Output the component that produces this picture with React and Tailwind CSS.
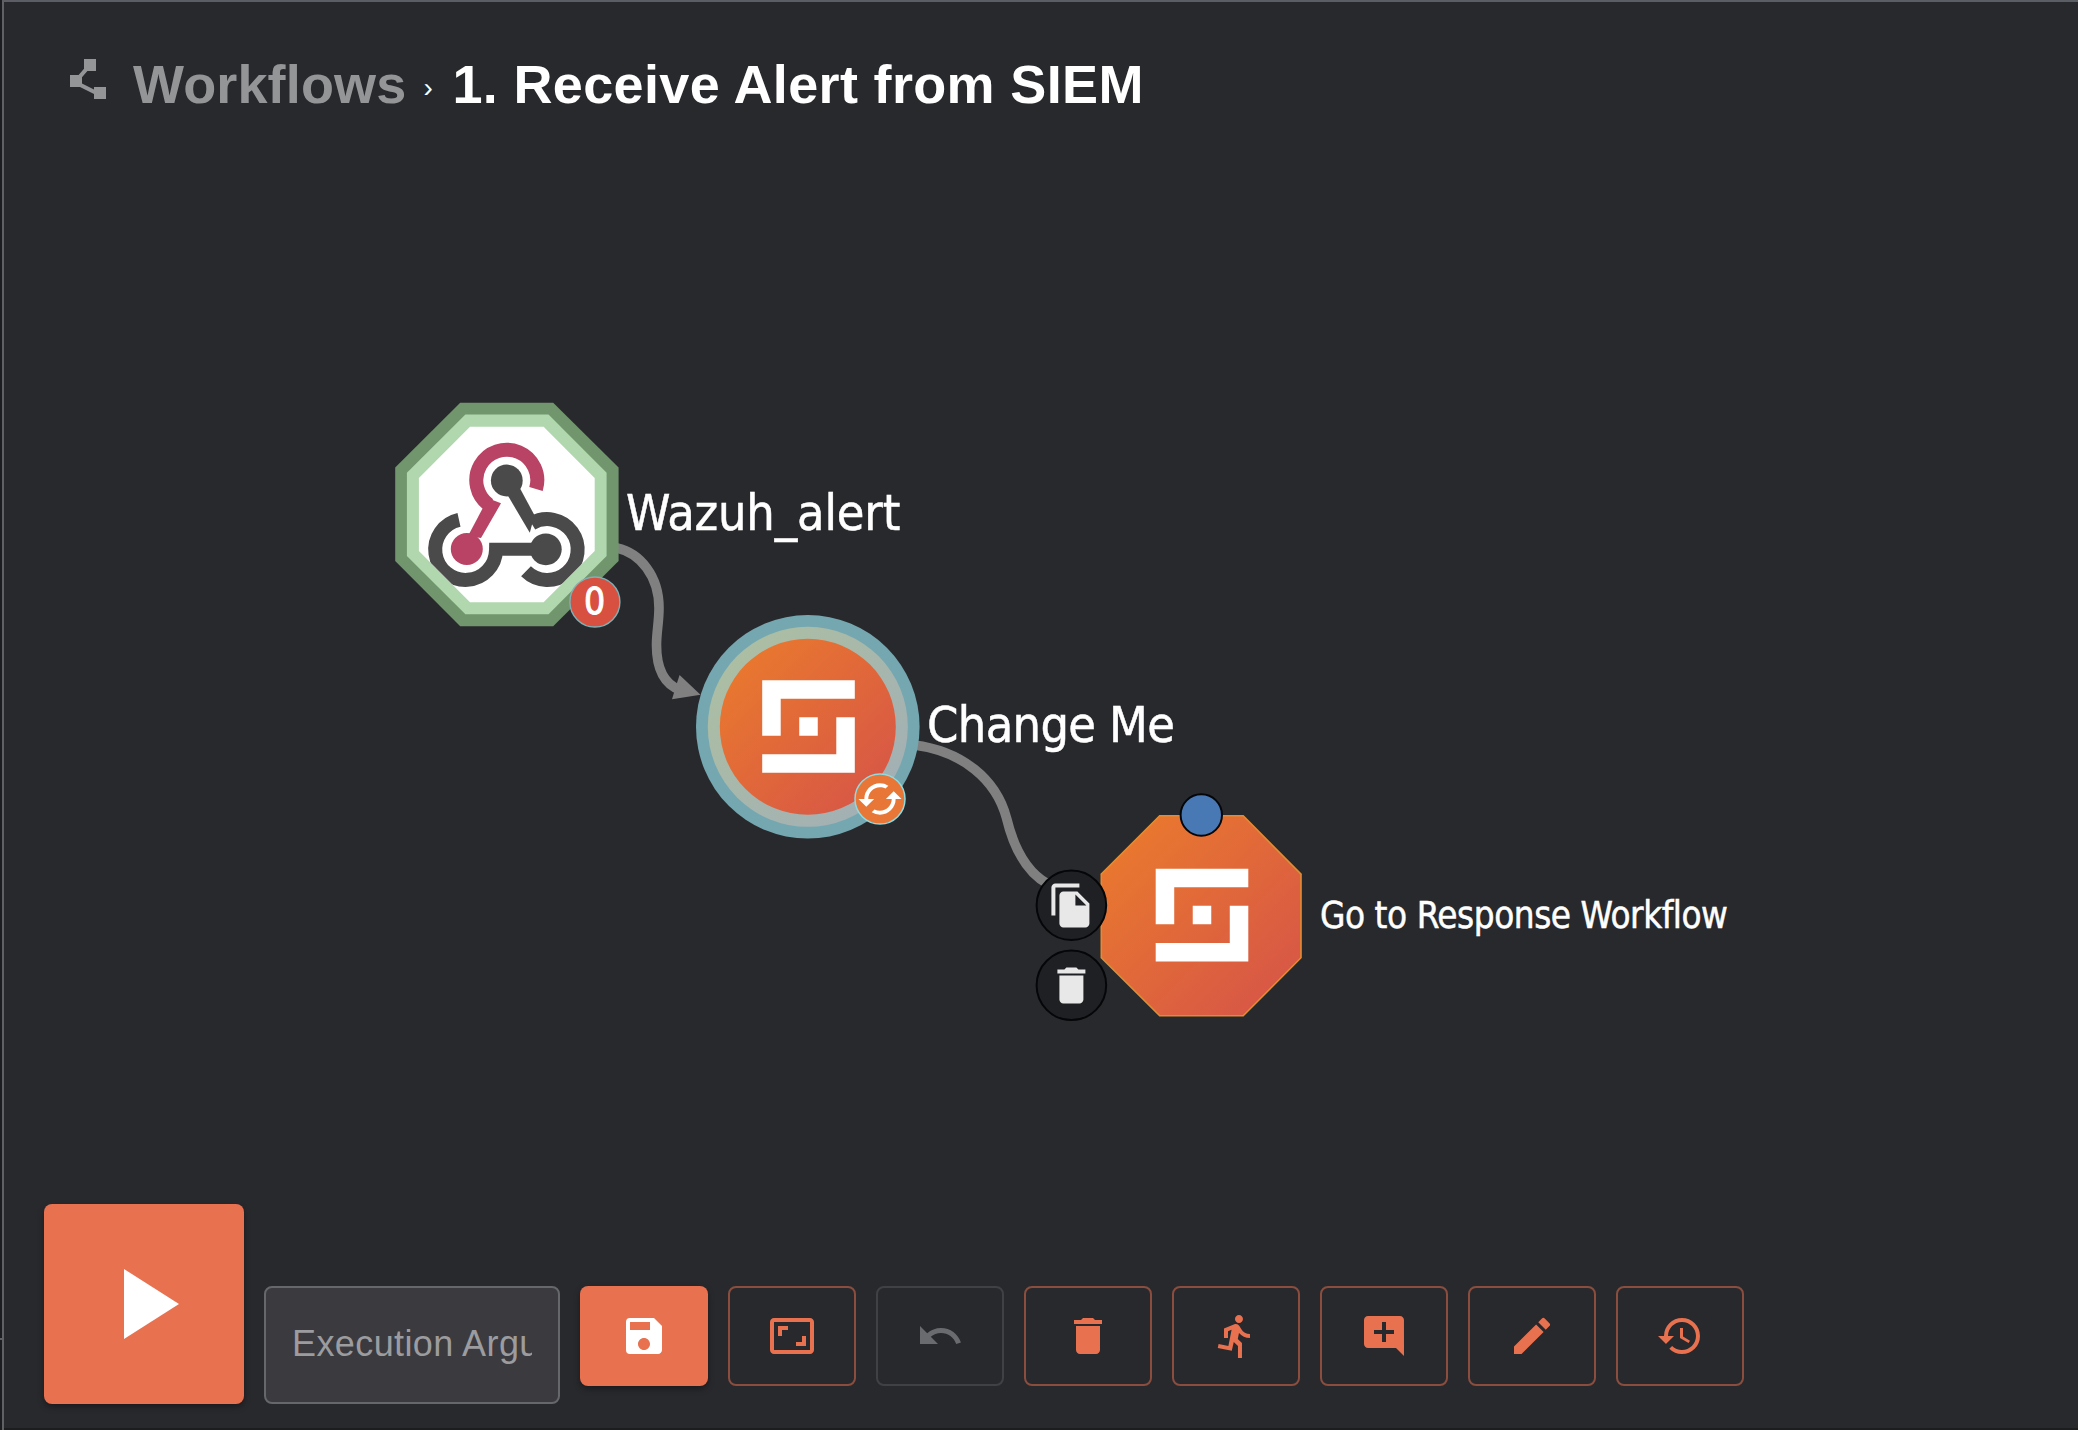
import React from "react";
import {
  MdPolyline, MdSave, MdAspectRatio, MdUndo, MdDelete, MdDirectionsRun,
  MdAddComment, MdEdit, MdHistory, MdCached, MdFileCopy, MdPlayArrow,
} from "react-icons/md";

const labelFont = "font-['DejaVu_Sans_Condensed','DejaVu_Sans',sans-serif] [font-stretch:condensed] whitespace-nowrap";

function WebhookLogo() {
  return (
    <g fill="none" strokeWidth="14">
      <path stroke="#b84364" d="M536 489 A30.5 30.5 0 1 0 489 505" />
      <path fill="#b84364" d="M482.3 509 L490 499 L501 503.3 L481 538 L468 536 Z" />
      <circle cx="466.8" cy="549" r="16" fill="#b84364" />
      <circle cx="506.8" cy="480.5" r="15.9" fill="#4a4a4a" />
      <path fill="#4a4a4a" d="M507.5 495 L519.8 488 L534.5 515.3 L529.8 532.7 Z" />
      <path stroke="#4a4a4a" d="M531.6 523.5 A30.4 30.4 0 1 1 526 571.3" />
      <circle cx="545.8" cy="549.3" r="15.9" fill="#4a4a4a" />
      <path fill="#4a4a4a" d="M489.2 542.7 H535 V555.8 H502.5 L489 552 Z" />
      <path stroke="#4a4a4a" d="M496 550 A30.4 30.4 0 1 1 459 519.8" />
    </g>
  );
}

function ShuffleLogo({ x, y }) {
  return (
    <path
      transform={`translate(${x} ${y}) scale(18.52)`}
      fill="#fff"
      d="M0 0H5V1H1V3H0ZM2 2H3V3H2ZM4 2H5V5H0V4H4Z"
    />
  );
}

function Graph() {
  return (
    <svg className="block h-full w-full" viewBox="4 128 2074 1076">
      <defs>
        <linearGradient id="orange" x1="0.06" y1="0.06" x2="0.96" y2="0.96">
          <stop offset="0" stopColor="#ea7a2d" />
          <stop offset="1" stopColor="#d65448" />
        </linearGradient>
        <linearGradient id="ring" x1="0.1" y1="0.1" x2="0.9" y2="0.9">
          <stop offset="0" stopColor="#acbfa2" />
          <stop offset="1" stopColor="#a2afb5" />
        </linearGradient>
      </defs>

      <g fill="none" stroke="#808080" strokeWidth="9.6">
        <path d="M617 548 C640 553 659 576 659 608 C659 622 656.5 632 656.5 645 C656.5 668 664 684 680 690" />
        <path d="M914 745 C962 751 996 779 1006.5 818 C1014 849 1028 873 1048 884" />
      </g>
      <path fill="#808080" d="M700.5 694.8 L679.6 675 L677 683 L672 699.3 Z" />

      <path fill="#71956d" d="M460.2 402.7H553.2L618.6 467.5V561L553.2 626.3H460.2L395.2 561V467.5Z" />
      <path fill="#b0d7ad" d="M465.4 414.5H548.5L606.6 472.7V556L548.5 614.2H465.4L406.9 556V472.7Z" />
      <path fill="#fff" d="M470 426.7H543.6L594.7 477.9V551L543.6 602.2H470L418.9 551V477.9Z" />
      <clipPath id="face">
        <path d="M470 426.7H543.6L594.7 477.9V551L543.6 602.2H470L418.9 551V477.9Z" />
      </clipPath>
      <g clipPath="url(#face)"><WebhookLogo /></g>
      <circle cx="594.9" cy="602" r="25" fill="#d8503f" stroke="#7fb0b6" strokeWidth="1.4" />

      <circle cx="807.8" cy="726.8" r="111.8" fill="#75a7b1" />
      <circle cx="807.8" cy="726.8" r="100" fill="url(#ring)" />
      <circle cx="807.8" cy="726.8" r="88" fill="url(#orange)" />
      <ShuffleLogo x={762.2} y={680.2} />
      <circle cx="880" cy="799" r="25" fill="#e87636" stroke="#8edbe2" strokeWidth="1.5" />
      <MdCached x="856.5" y="775.5" size={47} color="#fff" />

      <path
        fill="url(#orange)" stroke="#df8d34" strokeWidth="1.6"
        d="M1159.7 815.7H1243.2L1301 874.2V957.7L1243.2 1015.7H1159.7L1101.3 957.7V874.2Z"
      />
      <ShuffleLogo x={1155.7} y={868.8} />
      <circle cx="1201.3" cy="815" r="20.7" fill="#4879b4" stroke="#050608" strokeWidth="2" />
      {[905.3, 985.3].map((cy) => (
        <circle key={cy} cx="1071.4" cy={cy} r="34.8" fill="#1f2024" stroke="#050608" strokeWidth="2" />
      ))}
      <MdFileCopy x="1047.4" y="881.6" size={48} color="#e8e8e8" />
      <MdDelete x="1047.4" y="961.4" size={48} color="#e8e8e8" />
    </svg>
  );
}

const tools = [
  { name: "Save", Icon: MdSave, look: "bg-[#e8714f] text-white shadow-[0_3px_6px_rgba(0,0,0,0.35)]" },
  { name: "Fit to screen", Icon: MdAspectRatio, look: "border-2 border-[#8a4d3e] text-[#e8714f]" },
  { name: "Undo", Icon: MdUndo, look: "border-2 border-[#404145] text-[#6a6b6e]" },
  { name: "Delete", Icon: MdDelete, look: "border-2 border-[#8a4d3e] text-[#e8714f]" },
  { name: "Show executions", Icon: MdDirectionsRun, look: "border-2 border-[#8a4d3e] text-[#e8714f]" },
  { name: "Add comment", Icon: MdAddComment, look: "border-2 border-[#8a4d3e] text-[#e8714f]" },
  { name: "Edit", Icon: MdEdit, look: "border-2 border-[#8a4d3e] text-[#e8714f]" },
  { name: "History", Icon: MdHistory, look: "border-2 border-[#8a4d3e] text-[#e8714f]" },
];

export default function App() {
  return (
    <div className="flex h-[1430px] w-[2078px] overflow-hidden bg-[#28292d] font-['Liberation_Sans',Arial,sans-serif]">
      <div className="flex w-[2px] shrink-0 flex-col bg-[#1c1d20] pt-[1338px]">
        <div className="h-[2px] bg-[#5f6165]" />
      </div>
      <div className="flex min-w-0 flex-1 flex-col border-t-2 border-l-2 border-t-[#5c5e65] border-l-[#5f6165]">
        <header className="flex h-[126px] shrink-0 items-start pt-[54px] pl-[60px] text-[54px] leading-none font-bold tracking-[0.35px] whitespace-nowrap">
          <MdPolyline size={48} className="-mt-px shrink-0 text-[#949597]" />
          <span className="mt-px ml-[21px] tracking-[0.15px] text-[#949597]">Workflows</span>
          <span className="mt-[18px] ml-[17px] w-[29px] text-[28px] font-normal text-white">›</span>
          <h1 className="mt-px text-white">1. Receive Alert from SIEM</h1>
        </header>

        <main className="relative h-[1076px] shrink-0 text-white [-webkit-text-stroke:0.5px_white]">
          <Graph />
          <span className={`absolute top-[360px] left-[622px] text-[50px] leading-none tracking-[-0.15px] ${labelFont}`}>Wazuh_alert</span>
          <span className={`absolute top-[455px] left-[580px] text-[37px] leading-none [-webkit-text-stroke:1px_white] ${labelFont}`}>0</span>
          <span className={`absolute top-[572px] left-[923px] text-[50px] leading-none tracking-[-0.65px] ${labelFont}`}>Change Me</span>
          <span className={`absolute top-[770px] left-[1316px] text-[36.5px] leading-none tracking-[-0.45px] ${labelFont}`}>Go to Response Workflow</span>
        </main>

        <footer className="flex flex-1 items-start gap-5 border-b-2 border-[#1c1d1f] pl-10">
          <button className="flex size-[200px] shrink-0 items-center justify-center rounded-lg bg-[#e8714f] text-white shadow-[0_3px_6px_rgba(0,0,0,0.35)]">
            <MdPlayArrow size={120} />
          </button>
          <div className="mt-[82px] flex h-[118px] w-[296px] shrink-0 items-center rounded-lg border-2 border-[#65676b] bg-[#3a3a3f] px-[26px]">
            <span className="mt-[-3px] overflow-hidden text-[36px] leading-[44px] tracking-[0.4px] whitespace-nowrap text-[#9c9c9f]">
              Execution Argument
            </span>
          </div>
          {tools.map(({ name, Icon, look }) => (
            <button
              key={name}
              aria-label={name}
              className={`mt-[82px] flex h-[100px] w-[128px] shrink-0 items-center justify-center rounded-lg ${look}`}
            >
              <Icon size={48} />
            </button>
          ))}
        </footer>
      </div>
    </div>
  );
}
